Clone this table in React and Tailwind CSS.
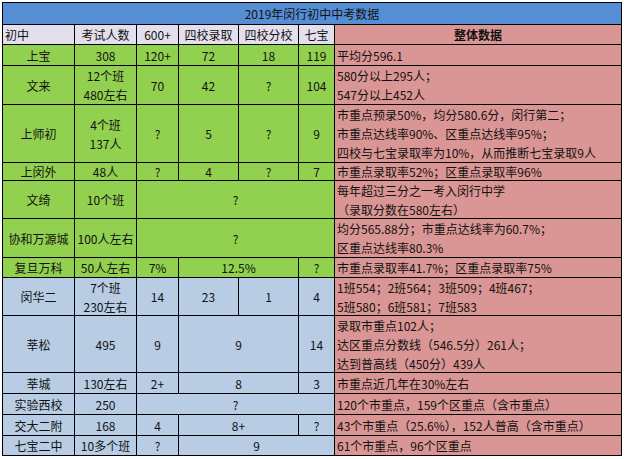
import React from "react";

const G = "bg-[#92d050]";
const B = "bg-[#b8cce4]";
const P = "bg-[#da9694]";

const SPAN = { 1: "", 2: "col-span-2", 3: "col-span-3", 4: "col-span-4" };

const rows = [
  { c: G, cells: [["上宝"], ["308"], ["120+"], ["72"], ["18"], ["119"]], note: ["平均分596.1"] },
  { c: G, cells: [["文来"], ["12个班", "480左右"], ["70"], ["42"], ["?"], ["104"]], note: ["580分以上295人；", "547分以上452人"] },
  {
    c: G,
    cells: [["上师初"], ["4个班", "137人"], ["?"], ["5"], ["?"], ["9"]],
    note: ["市重点预录50%，均分580.6分，闵行第二；", "市重点达线率90%、区重点达线率95%；", "四校与七宝录取率为10%，从而推断七宝录取9人"],
  },
  { c: G, cells: [["上闵外"], ["48人"], ["?"], ["4"], ["?"], ["7"]], note: ["市重点录取率52%；区重点录取率96%"] },
  { c: G, cells: [["文绮"], ["10个班"], ["?", 4]], note: ["每年超过三分之一考入闵行中学", "（录取分数在580左右）"] },
  { c: G, cells: [["协和万源城"], ["100人左右"], ["?", 4]], note: ["均分565.88分；市重点达线率为60.7%；", "区重点达线率80.3%"] },
  { c: G, cells: [["复旦万科"], ["50人左右"], ["7%"], ["12.5%", 2], ["?"]], note: ["市重点录取率41.7%；区重点录取率75%"] },
  { c: B, cells: [["闵华二"], ["7个班", "230左右"], ["14"], ["23"], ["1"], ["4"]], note: ["1班554；2班564；3班509；4班467；", "5班580；6班581；7班583"] },
  {
    c: B,
    cells: [["莘松"], ["495"], ["9"], ["9", 2], ["14"]],
    note: ["录取市重点102人；", "达区重点分数线（546.5分）261人；", "达到普高线（450分）439人"],
  },
  { c: B, cells: [["莘城"], ["130左右"], ["2+"], ["8", 2], ["3"]], note: ["市重点近几年在30%左右"] },
  { c: B, cells: [["实验西校"], ["250"], ["?", 4]], note: ["120个市重点，159个区重点（含市重点）"] },
  { c: B, cells: [["交大二附"], ["168"], ["4"], ["8+", 2], ["?"]], note: ["43个市重点（25.6%），152人普高（含市重点）"] },
  { c: B, cells: [["七宝二中"], ["10多个班"], ["?"], ["9", 3]], note: ["61个市重点，96个区重点"] },
];

const cell = "flex flex-col justify-center items-center text-center leading-[19px] whitespace-nowrap overflow-visible";

export default function App() {
  return (
    <div className="w-[624px] h-[459px] bg-white pl-[2px] pt-[2px] text-[12px] text-[#111] font-['Noto_Sans_CJK_SC','Noto_Sans',sans-serif]">
      <div className="w-[620px] grid grid-cols-[71px_61px_41px_59px_59px_35px_286px] grid-rows-[21px_19px_20px_38px_57px_17px_37px_38px_19px_37px_56px_20px_20px_20px_19px] gap-px p-px bg-black">
        <div className={`${cell} col-span-7 bg-[#558ed5]`}>2019年闵行初中中考数据</div>

        <div className={`${cell} bg-[#e4dfec] !items-start pl-[2px]`}>初中</div>
        <div className={`${cell} bg-[#e4dfec]`}>考试人数</div>
        <div className={`${cell} bg-[#e4dfec]`}>600+</div>
        <div className={`${cell} bg-[#e4dfec]`}>四校录取</div>
        <div className={`${cell} bg-[#e4dfec]`}>四校分校</div>
        <div className={`${cell} bg-[#e4dfec]`}>七宝</div>
        <div className={`${cell} ${P} font-bold`}>整体数据</div>

        {rows.map((r, i) => (
          <React.Fragment key={i}>
            {r.cells.map((c, j) => {
              const lines = typeof c[1] === "string" ? c : [c[0]];
              const span = typeof c[1] === "number" ? c[1] : 1;
              return (
                <div key={j} className={`${cell} ${r.c} ${SPAN[span]}`}>
                  {lines.map((l, k) => (
                    <div key={k}>{l}</div>
                  ))}
                </div>
              );
            })}
            <div className={`${cell} ${P} !items-start text-left pl-[2px]`}>
              {r.note.map((l, k) => (
                <div key={k}>{l}</div>
              ))}
            </div>
          </React.Fragment>
        ))}
      </div>
    </div>
  );
}
